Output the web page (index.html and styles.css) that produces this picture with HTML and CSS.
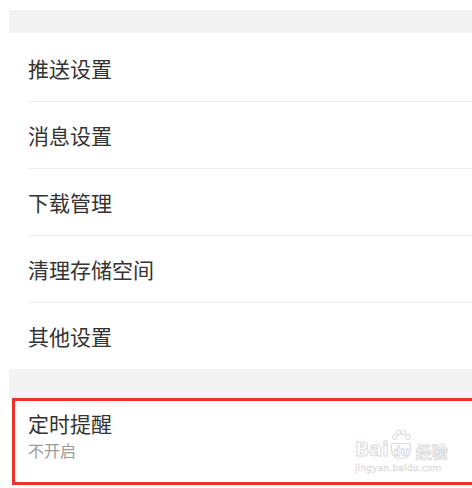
FILE: index.html
```html
<!DOCTYPE html>
<html lang="zh-CN">
<head>
<meta charset="utf-8">
<link rel="stylesheet" href="styles.css">
</head>
<body>
<div class="page">
  <div class="band"></div>
  <div class="list">
    <div class="row">推送设置</div>
    <div class="row">消息设置</div>
    <div class="row">下载管理</div>
    <div class="row">清理存储空间</div>
    <div class="row last">其他设置</div>
  </div>
  <div class="band band2"></div>
  <div class="highlight">
    <div class="title">定时提醒</div>
    <div class="sub">不开启</div>
    <div class="watermark">
      <div class="wm-top">
        <span class="wm-bai">Bai</span>
        <span class="wm-du">
          <svg class="paw" viewBox="0 0 24 20" width="22" height="18">
            <g fill="none" stroke="#dcdcdc" stroke-width="1.2">
              <ellipse cx="5" cy="9" rx="2.2" ry="2.8"/>
              <ellipse cx="9.5" cy="4" rx="2.2" ry="2.8"/>
              <ellipse cx="15" cy="4" rx="2.2" ry="2.8"/>
              <ellipse cx="19.5" cy="9" rx="2.2" ry="2.8"/>
            </g>
          </svg>
          <span class="du">du</span>
        </span>
        <span class="wm-jy">经验</span>
      </div>
      <div class="wm-url">jingyan.baidu.com</div>
    </div>
  </div>
</div>
</body>
</html>
```
FILE: styles.css
```css
html, body {
  margin: 0;
  padding: 0;
  background: #ffffff;
}
body {
  font-family: "Noto Sans CJK SC", "Noto Sans", sans-serif;
  width: 472px;
  height: 488px;
  overflow: hidden;
}
.page {
  padding: 10px 0 0 9px;
}
.band {
  height: 23px;
  background: #f3f3f3;
}
.band2 {
  height: 29px;
}
.list {
  padding-top: 2px;
}
.row {
  height: 66px;
  margin-left: 19px;
  border-bottom: 1px solid #ececec;
  display: flex;
  align-items: center;
  font-size: 21px;
  color: #333333;
  line-height: 1;
}
.row.last {
  border-bottom: none;
}
.highlight {
  position: relative;
  margin-left: 3px;
  border: 3px solid #f0302c;
  border-right: none;
  box-sizing: content-box;
  padding: 12px 0 0 13px;
  height: 69px;
}
.title {
  font-size: 21px;
  color: #333333;
  line-height: 21px;
}
.sub {
  font-size: 16px;
  color: #9a9a9a;
  line-height: 16px;
  margin-top: 8px;
}
.watermark {
  position: absolute;
  left: 340px;
  top: 28px;
  color: #e2e2e2;
  font-family: "DejaVu Sans", sans-serif;
}
.wm-top {
  display: flex;
  align-items: flex-end;
  height: 30px;
}
.wm-bai {
  font-size: 19px;
  font-weight: bold;
  line-height: 1;
  color: #ffffff;
  -webkit-text-stroke: 1px #dadada;
}
.wm-du {
  position: relative;
  width: 22px;
  height: 30px;
  margin-left: 1px;
}
.paw {
  position: absolute;
  left: 0;
  top: 0;
}
.du {
  position: absolute;
  left: 1px;
  bottom: 0;
  font-size: 12px;
  font-weight: bold;
  line-height: 16px;
  width: 20px;
  height: 16px;
  text-align: center;
  border: 1px solid #dcdcdc;
  border-radius: 0 0 8px 8px;
  box-sizing: border-box;
  color: #ffffff;
  -webkit-text-stroke: 0.8px #d6d6d6;
}
.wm-jy {
  font-family: "Noto Sans CJK SC", sans-serif;
  font-size: 16px;
  font-weight: bold;
  line-height: 1;
  margin-left: 4px;
  color: #ffffff;
  -webkit-text-stroke: 0.8px #d8d8d8;
}
.wm-url {
  font-size: 9px;
  margin-top: 4px;
  color: #ffffff;
  -webkit-text-stroke: 0.5px #d8d8d8;
  letter-spacing: 0.2px;
}
```
